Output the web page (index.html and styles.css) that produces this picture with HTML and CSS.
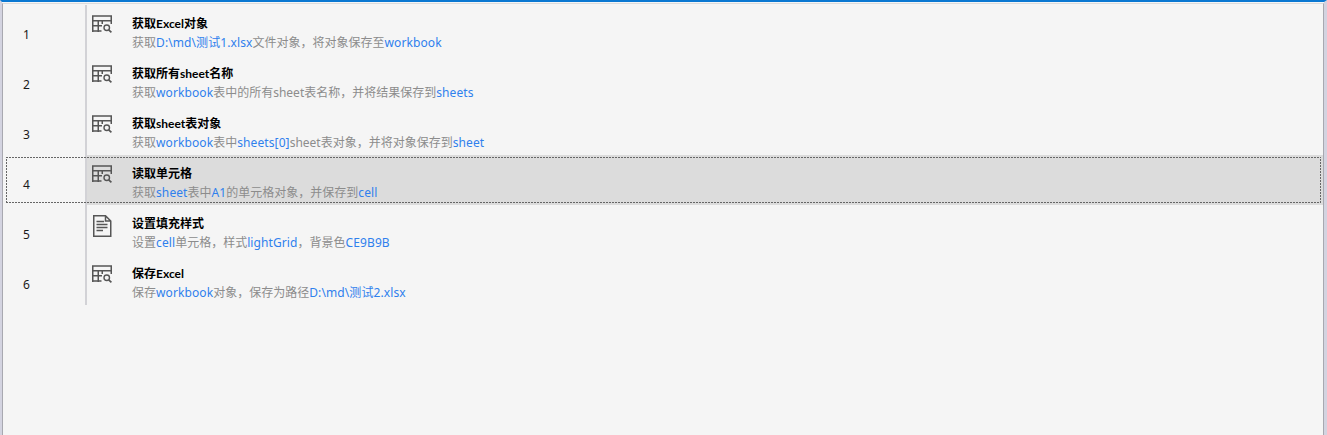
FILE: index.html
```html
<!DOCTYPE html>
<html lang="zh-CN">
<head>
<meta charset="UTF-8" />
<title>流程步骤</title>
<link rel="stylesheet" href="styles.css">
</head>
<body>

<svg class="icon-defs" width="0" height="0">
  <symbol id="icon-table" viewBox="0 0 22 22">
    <path d="M1.75 17V1H20.25V9M1.75 5.75H20.25M1.75 10.75H11M1.75 16H10.5M7.25 5.75V17M11.25 5.75V9" fill="none" stroke="#565656" stroke-width="1.5"/>
    <circle cx="15.75" cy="12.75" r="2.75" fill="none" stroke="#565656" stroke-width="1.4"/>
    <path d="M17.7 14.8L20.4 17.4" fill="none" stroke="#565656" stroke-width="1.7"/>
  </symbol>
  <symbol id="icon-doc" viewBox="0 0 22 22">
    <path d="M2.75 0.75H14.5L19.75 6V21.25H2.75ZM14.5 0.75V6H19.75" fill="none" stroke="#565656" stroke-width="1.5"/>
    <path d="M5.5 6.5H13M5.5 9.5H16.5M5.5 12.5H16.5M5.5 15.5H12" fill="none" stroke="#565656" stroke-width="1.4"/>
  </symbol>
</svg>

<div class="panel">
  <div class="step">
    <div class="step-num">1</div>
    <div class="step-body">
      <svg class="icon"><use href="#icon-table"/></svg>
      <div class="step-text">
        <div class="step-title">获取Excel对象</div>
        <div class="step-desc">获取<span class="val">D:\md\测试1.xlsx</span>文件对象，将对象保存至<span class="val">workbook</span></div>
      </div>
    </div>
  </div>
  <div class="step">
    <div class="step-num">2</div>
    <div class="step-body">
      <svg class="icon"><use href="#icon-table"/></svg>
      <div class="step-text">
        <div class="step-title">获取所有sheet名称</div>
        <div class="step-desc">获取<span class="val">workbook</span>表中的所有sheet表名称，并将结果保存到<span class="val">sheets</span></div>
      </div>
    </div>
  </div>
  <div class="step">
    <div class="step-num">3</div>
    <div class="step-body">
      <svg class="icon"><use href="#icon-table"/></svg>
      <div class="step-text">
        <div class="step-title">获取sheet表对象</div>
        <div class="step-desc">获取<span class="val">workbook</span>表中<span class="val">sheets[0]</span>sheet表对象，并将对象保存到<span class="val">sheet</span></div>
      </div>
    </div>
  </div>
  <div class="step selected">
    <div class="step-num">4</div>
    <div class="step-body">
      <svg class="icon"><use href="#icon-table"/></svg>
      <div class="step-text">
        <div class="step-title">读取单元格</div>
        <div class="step-desc">获取<span class="val">sheet</span>表中<span class="val">A1</span>的单元格对象，并保存到<span class="val">cell</span></div>
      </div>
    </div>
  </div>
  <div class="step">
    <div class="step-num">5</div>
    <div class="step-body">
      <svg class="icon"><use href="#icon-doc"/></svg>
      <div class="step-text">
        <div class="step-title">设置填充样式</div>
        <div class="step-desc">设置<span class="val">cell</span>单元格，样式<span class="val">lightGrid</span>，背景色<span class="val">CE9B9B</span></div>
      </div>
    </div>
  </div>
  <div class="step">
    <div class="step-num">6</div>
    <div class="step-body">
      <svg class="icon"><use href="#icon-table"/></svg>
      <div class="step-text">
        <div class="step-title">保存Excel</div>
        <div class="step-desc">保存<span class="val">workbook</span>对象，保存为路径<span class="val">D:\md\测试2.xlsx</span></div>
      </div>
    </div>
  </div>
</div>

</body>
</html>
```

FILE: styles.css
```css
html, body {
  height: 100%;
}
body {
  box-sizing: border-box;
  margin: 0;
  padding-top: 1px;
  background: #f5f5f5;
  border-top: 2px solid #0a78d2;
  border-left: 2px solid #d3d3e0;
  border-right: 3px solid #d3d3e0;
  font-family: "Noto Sans", "Noto Sans CJK SC", sans-serif;
  font-size: 12px;
  overflow: hidden;
}
.icon-defs {
  display: none;
}
.panel {
  box-sizing: border-box;
  height: 100%;
  padding: 1px 0 0 2px;
  border-top: 1px solid #dcdcdc;
  border-left: 1px solid #a8a8b0;
  border-right: 1px solid #a8a8b0;
}
.step {
  position: relative;
  display: flex;
  height: 50px;
}
.step-num {
  width: 80px;
  flex: none;
  padding-top: 22px;
  padding-left: 18px;
  box-sizing: border-box;
  color: #1a1a1a;
  line-height: 16px;
}
.step-body {
  flex: 1;
  display: flex;
  border-left: 2px solid #d2d2d6;
}
.icon {
  width: 22px;
  height: 22px;
  margin: 10px 0 0 4px;
  flex: none;
}
.step-text {
  margin-left: 19px;
  padding-top: 10px;
}
.step-title {
  color: #000;
  font-family: Lato, "Noto Sans CJK SC", sans-serif;
  font-weight: 700;
  line-height: 18px;
}
.step-desc {
  color: #8c8c8c;
  line-height: 20px;
}
.val {
  color: #2f80ed;
  letter-spacing: 0.1px;
}
.selected .step-body {
  background: #dcdcdc;
}
/* focus box, 2px dash 1px gap */
.selected::after {
  content: "";
  position: absolute;
  top: 2px;
  bottom: 2px;
  left: 1px;
  right: 2px;
  background:
    repeating-linear-gradient(90deg, #666 0 2px, transparent 2px 3px) top / 100% 1px no-repeat,
    repeating-linear-gradient(90deg, #666 0 2px, transparent 2px 3px) bottom / 100% 1px no-repeat,
    repeating-linear-gradient(0deg, #666 0 2px, transparent 2px 3px) left / 1px 100% no-repeat,
    repeating-linear-gradient(0deg, #666 0 2px, transparent 2px 3px) right / 1px 100% no-repeat;
}
```
